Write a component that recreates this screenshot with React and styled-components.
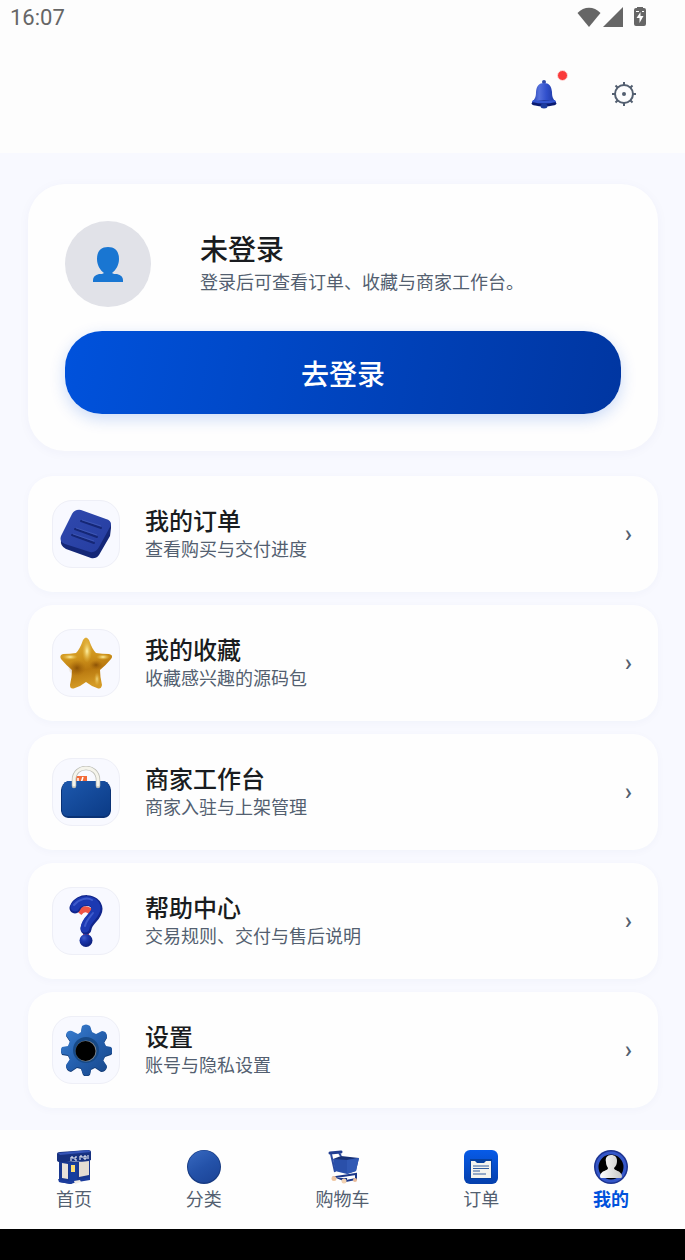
import styled, { createGlobalStyle } from 'styled-components';

const GlobalStyle = createGlobalStyle`
  * {
    box-sizing: border-box;
  }
  body {
    margin: 0;
    background: #f8f9ff;
    font-family: Roboto, 'Noto Sans CJK SC', sans-serif;
    color: #191c20;
  }
  h1, h2, p {
    margin: 0;
  }
`;

const Page = styled.div`
  display: flex;
  flex-direction: column;
  min-height: 100vh;
`;

const StatusBar = styled.div`
  display: flex;
  justify-content: space-between;
  align-items: center;
  height: 34px;
  padding: 0 38px 0 10px;
  background: #fdfdfd;
  color: #666;
  font-size: 22px;
`;

const StatusIcons = styled.div`
  display: flex;
  align-items: center;
  gap: 2px;
`;

const Header = styled.header`
  display: flex;
  justify-content: flex-end;
  align-items: center;
  gap: 24px;
  height: 119px;
  padding: 0 33px;
  background: #fdfdfd;
`;

const IconButton = styled.button`
  position: relative;
  display: flex;
  justify-content: center;
  align-items: center;
  width: 56px;
  height: 56px;
  padding: 0;
  border: none;
  border-radius: 50%;
  background: none;
  cursor: pointer;
`;

const Badge = styled.span`
  position: absolute;
  top: 4px;
  right: 4px;
  width: 11px;
  height: 11px;
  border: 1px solid #ffdfdf;
  border-radius: 50%;
  background: #fa3a3a;
`;

const Main = styled.main`
  flex: 1;
  padding: 31px 27px 21px 28px;
`;

const ProfileCard = styled.section`
  padding: 37px;
  border-radius: 37px;
  background: #fefefe;
  box-shadow: 0 2px 12px rgba(40, 60, 140, 0.04);
`;

const Profile = styled.div`
  display: flex;
  align-items: center;
  gap: 49px;
  margin-bottom: 24px;
`;

const Avatar = styled.div`
  display: flex;
  justify-content: center;
  align-items: center;
  width: 86px;
  height: 86px;
  border-radius: 50%;
  background: #e1e2e8;
`;

const ProfileText = styled.div`
  padding-top: 2px;
`;

const ProfileName = styled.h1`
  font-size: 28px;
  line-height: 36px;
  font-weight: 500;
`;

const Description = styled.p`
  color: #535f70;
  font-size: 18px;
  line-height: 28px;
`;

const LoginButton = styled.button`
  width: 100%;
  height: 83px;
  border: none;
  border-radius: 37px;
  background: linear-gradient(100deg, #0052dc, #0036a1);
  box-shadow: 0 5px 16px rgba(0, 82, 220, 0.2);
  color: #fff;
  font-family: inherit;
  font-size: 28px;
  font-weight: 500;
  cursor: pointer;
`;

const Menu = styled.nav`
  display: flex;
  flex-direction: column;
  gap: 13px;
  margin-top: 25px;
`;

const MenuRow = styled.a`
  display: flex;
  align-items: center;
  gap: 25px;
  padding: 24px 26px 24px 24px;
  border-radius: 25px;
  background: #fefefe;
  box-shadow: 0 2px 8px rgba(40, 60, 140, 0.03);
  color: inherit;
  text-decoration: none;
`;

const IconTile = styled.div`
  display: flex;
  justify-content: center;
  align-items: center;
  width: 68px;
  height: 68px;
  border: 1px solid #eeeff7;
  border-radius: 20px;
  background: #f8f9ff;
`;

const RowText = styled.div`
  flex: 1;
  padding-top: 4px;
`;

const RowTitle = styled.h2`
  font-size: 24px;
  line-height: 28px;
  font-weight: 500;
`;

const Chevron = styled.span`
  color: #535f70;
  font-size: 24px;
  font-weight: 500;
`;

const TabBar = styled.nav`
  display: flex;
  justify-content: space-between;
  height: 99px;
  padding: 20px 56px 0;
  background: #fefefe;
`;

const Tab = styled.a`
  display: flex;
  flex-direction: column;
  align-items: center;
  color: ${(props) => (props.$active ? '#0052dc' : '#535f70')};
  font-size: 18px;
  line-height: 31px;
  font-weight: ${(props) => (props.$active ? 700 : 400)};
  text-decoration: none;
`;

const SystemBar = styled.div`
  height: 31px;
  background: #000;
`;

const WifiIcon = () => (
  <svg width="24" height="20" viewBox="0 0 24 20" aria-hidden="true">
    <path d="M0.5 6C7-1 17-1 23.5 6L12 20Z" fill="#666" />
  </svg>
);

const SignalIcon = () => (
  <svg width="20" height="20" viewBox="0 0 20 20" aria-hidden="true">
    <path d="M20 0V20H0Z" fill="#666" />
  </svg>
);

const BatteryIcon = () => (
  <svg width="22" height="20" viewBox="0 0 22 20" aria-hidden="true">
    <path d="M12 0h6v1h1q2 0 2 2v14q0 2-2 2h-8q-2 0-2-2V3q0-2 2-2h1Z" fill="#666" />
    <path d="M15.5 5l-4 6h3v5l4-7h-3ZM11 4h3v1h-3ZM17 4h2v1h-2Z" fill="#fff" />
  </svg>
);

const BellIcon = () => (
  <svg width="26" height="30" viewBox="0 0 26 30" aria-hidden="true">
    <defs>
      <linearGradient id="bell">
        <stop offset="0" stopColor="#2440b0" />
        <stop offset="0.3" stopColor="#5570dc" />
        <stop offset="0.6" stopColor="#3150cc" />
        <stop offset="1" stopColor="#1c359d" />
      </linearGradient>
    </defs>
    <circle cx="13" cy="3" r="2" fill="#304aa8" />
    <path d="M13 4C8 4 5.500 7 5 13c0 5-1 7-4 10v2h24v-2c-3-3-4-5-4-10-.5-6-3-9-8-9Z" fill="url(#bell)" />
    <ellipse cx="13" cy="24.500" rx="12.500" ry="3" fill="#0a1b70" />
    <path d="M1 23q12 3 24 0l-1-2q-11 2-22 0Z" fill="#3455ce" />
    <ellipse cx="13" cy="27" rx="3.500" ry="2.500" fill="#1b3a9c" />
  </svg>
);

const SettingsIcon = () => (
  <svg width="24" height="24" viewBox="0 0 24 24" fill="none" stroke="#535f70" strokeWidth="2" aria-hidden="true">
    <circle cx="12" cy="12" r="9" />
    <circle cx="12" cy="12" r="2" fill="#535f70" stroke="none" />
    <path d="M12 0v3M12 21v3M0 12h3M21 12h3M3.500 3.500l2 2M18.500 18.500l2 2M20.500 3.500l-2 2M5.500 18.500l-2 2" />
  </svg>
);

const PersonIcon = () => (
  <svg width="30" height="35" viewBox="0 0 30 35" fill="#1976d2" aria-hidden="true">
    <path d="M15 0C8 0 4 4 4 12c0 6 3 11 7 14-1 1-3 1-5 1-4 1-6 3-6 6v2h30v-2c0-3-2-5-6-6-2 0-4 0-5-1 4-3 7-8 7-14 0-8-4-12-11-12Z" />
  </svg>
);

const OrderArt = () => (
  <svg width="52" height="50" viewBox="0 0 52 50" aria-hidden="true">
    <defs>
      <linearGradient id="order" x2="1" y2="1">
        <stop stopColor="#3049ae" />
        <stop offset="1" stopColor="#253da0" />
      </linearGradient>
    </defs>
    <path d="M14 6L46 11q6 2 5 8l-1 8-11 19q-3 4-8 3L6 40q-6-3-5-9Z" fill="#142777" />
    <path d="M12 5q3-5 9-4l25 9q7 2 4 8L39 38q-3 6-9 5L5 35q-6-2-4-8Z" fill="url(#order)" />
    <path d="M21 12l20 7M15 20l22 8M12 26l22 8" stroke="#152776" strokeWidth="2" strokeLinecap="round" />
    <path d="M22 11l19 6M16 19l21 7M13 25l21 7" stroke="#4a63bc" strokeWidth="0.6" />
  </svg>
);

const StarArt = () => (
  <svg width="52" height="52" viewBox="0 0 52 52" aria-hidden="true">
    <defs>
      <linearGradient id="gold" x2="0.2" y2="1">
        <stop offset="0" stopColor="#e3b33f" />
        <stop offset="0.45" stopColor="#cf941c" />
        <stop offset="0.7" stopColor="#b8780f" />
        <stop offset="1" stopColor="#d49a25" />
      </linearGradient>
      <radialGradient id="goldLight">
        <stop stopColor="#fff3a8" />
        <stop offset="1" stopColor="#e8b93c" stopOpacity="0" />
      </radialGradient>
      <radialGradient id="goldDark">
        <stop stopColor="#7f4702" stopOpacity="0.8" />
        <stop offset="1" stopColor="#a5640a" stopOpacity="0" />
      </radialGradient>
    </defs>
    <path
      d="M23 3q3-5 6 0 3 9 7 13 6 1 13 1 5 1 2 5-5 6-11 11 0 7 2 15-1 5-5 3-6-2-11-6-5 4-11 6-5 2-5-3 2-8 2-15Q6 28 1 22q-2-4 2-5 7 0 13-1 4-4 7-13Z"
      fill="url(#gold)"
    />
    <ellipse cx="17" cy="31" rx="9" ry="8" fill="url(#goldDark)" />
    <ellipse cx="36" cy="28" rx="7" ry="5" fill="url(#goldDark)" />
    <ellipse cx="27" cy="14" rx="5" ry="12" fill="url(#goldLight)" />
    <ellipse cx="10" cy="20" rx="8" ry="3" fill="url(#goldLight)" />
    <ellipse cx="43" cy="20" rx="7" ry="3" fill="url(#goldLight)" />
    <ellipse cx="37" cy="42" rx="3" ry="7" fill="url(#goldLight)" opacity="0.7" />
  </svg>
);

const BagArt = () => (
  <svg width="50" height="52" viewBox="0 0 50 52" aria-hidden="true">
    <defs>
      <linearGradient id="bag" x2="1" y2="1">
        <stop stopColor="#1d58ad" />
        <stop offset="1" stopColor="#0b3b86" />
      </linearGradient>
    </defs>
    <path d="M12 10h14v7H12Z" fill="#f26b38" />
    <path d="M17 12v5M22 11l-2 6" stroke="#fff" strokeWidth="1.5" />
    <path d="M7 15h36q6 2 7 9v21q-1 6-7 7H7q-6-1-7-7V24q1-7 7-9Z" fill="#0a3275" />
    <path d="M7 15h36q6 2 6 9v20q-1 6-6 6H7q-6 0-6-6V24q0-7 6-9Z" fill="url(#bag)" />
    <path d="M13 20v-6C13-2 37-2 37 14v6" fill="none" stroke="#bdbeb7" strokeWidth="4.500" strokeLinecap="round" />
    <path d="M13 19v-5C13-2 37-2 37 14v5" fill="none" stroke="#f5f4eb" strokeWidth="3" strokeLinecap="round" />
  </svg>
);

const HelpArt = () => (
  <svg width="34" height="52" viewBox="0 0 34 52" fill="none" aria-hidden="true">
    <defs>
      <radialGradient id="ball" cx="0.35" cy="0.3" r="0.7">
        <stop stopColor="#3f5ccb" />
        <stop offset="0.4" stopColor="#1c37ad" />
        <stop offset="1" stopColor="#0c207e" />
      </radialGradient>
    </defs>
    <path d="M10 18q6-7 12-1M14 39h6" stroke="#f05445" strokeWidth="6" />
    <path d="M6 13C10 3 27 3 28 14c0 8-10 11-11 20" stroke="#11268c" strokeWidth="11" strokeLinecap="round" />
    <path d="M6 12C10 4 26 3 27 13c0 8-10 11-11 20" stroke="#1c39b2" strokeWidth="9" strokeLinecap="round" />
    <path d="M5 10C10 4 18 2 23 5M24 18c-4 5-7 8-8 13" stroke="#3e5bcb" strokeWidth="2" strokeLinecap="round" />
    <circle cx="17" cy="45.500" r="6.500" fill="url(#ball)" />
  </svg>
);

const GearArt = () => (
  <svg width="52" height="52" viewBox="0 0 52 52" aria-hidden="true">
    <defs>
      <linearGradient id="gear" x2="1" y2="1">
        <stop stopColor="#3d82d4" />
        <stop offset="0.5" stopColor="#245fae" />
        <stop offset="1" stopColor="#164587" />
      </linearGradient>
      <path
        id="gearShape"
        d="M22 2q4-3 8 0l2 6 4 2 6-3q5 0 5 6l-3 5 2 4 5 1q3 4 0 7l-6 2-2 4 4 6q-1 5-6 5l-6-4-4 2-1 5q-4 3-7 0l-2-6-4-1-6 4q-5-1-5-6l4-6-2-4-6-1q-2-4 0-7l6-1 2-5-4-6q1-5 6-4l6 3 3-2Z"
      />
    </defs>
    <use href="#gearShape" y="1" fill="#113a75" />
    <use href="#gearShape" fill="url(#gear)" />
    <circle cx="26" cy="26" r="13" fill="#174986" />
    <circle cx="26" cy="27" r="10.500" fill="#78818b" />
    <circle cx="25.500" cy="27" r="10" fill="#000" />
  </svg>
);

const HomeArt = () => (
  <svg width="34" height="34" viewBox="0 0 34 34" aria-hidden="true">
    <path d="M2 10l15 2 16-2v18l-14 3-5 3-12-2Z" fill="#1a388f" />
    <path d="M5 13l6 1v15l-6-1Z" fill="#e9e2d8" />
    <path d="M22 12l10-1v14l-10 2Z" fill="#e5ddd3" />
    <path d="M12 13h8v18l-8 1Z" fill="#173e9e" />
    <path d="M14 15h4v7h-4Z" fill="#ffdc70" />
    <path d="M0 4q0-2 3-2l28-2q3 0 3 2v8l-3 1-28 1q-3 0-3-2Z" fill="#17317f" />
    <path d="M1 3l30-3 3 2-31 3Z" fill="#3554b6" />
    <path d="M14 7v4M14 7h2v2M20 7h-2v3h2M23 6v4M23 6h2v2M27 6v3h2V6ZM31 5v4" stroke="#fff" strokeWidth="1" fill="none" />
    <path d="M1 29l11 2 8-1 13-3v3l-12 2-8 2-11-2Z" fill="#1b3c9c" />
    <path d="M17 31l6-1 1 2-6 2Z" fill="#f1ece5" />
  </svg>
);

const CategoryArt = () => (
  <svg width="34" height="34" viewBox="0 0 34 34" aria-hidden="true">
    <defs>
      <linearGradient id="disc" x1="0.2" x2="0.8" y2="1">
        <stop stopColor="#3566bd" />
        <stop offset="0.5" stopColor="#2452a9" />
        <stop offset="1" stopColor="#1c4598" />
      </linearGradient>
    </defs>
    <circle cx="17" cy="17" r="17" fill="#173b83" />
    <circle cx="17" cy="16.500" r="16" fill="url(#disc)" />
  </svg>
);

const CartArt = () => (
  <svg width="34" height="34" viewBox="0 0 34 34" fill="none" aria-hidden="true">
    <path d="M4 3l11-1" stroke="#213e91" strokeWidth="3" strokeLinecap="round" />
    <path d="M5 4l2 9 2 9M13 3l2 3" stroke="#2b4aa0" strokeWidth="2" />
    <path d="M7 9l26-1-3 13-9 3-12-3Z" fill="#2a50aa" />
    <path d="M7 9l8-3 18 2-12 2Z" fill="#173177" />
    <path d="M21 10l12-2-3 13-9 3Z" fill="#3159b4" />
    <path d="M10 27l20-3v5l-10 2ZM11 27l10 2" stroke="#1c388a" strokeWidth="2" />
    <circle cx="8" cy="28.500" r="2.500" fill="#efc6a1" />
    <circle cx="18" cy="31" r="2.500" fill="#f1d2b2" />
    <circle cx="29" cy="30" r="2" fill="#e8b999" />
  </svg>
);

const OrdersTabArt = () => (
  <svg width="34" height="34" viewBox="0 0 34 34" aria-hidden="true">
    <defs>
      <linearGradient id="tile" x2="0" y2="1">
        <stop stopColor="#075be8" />
        <stop offset="1" stopColor="#053fac" />
      </linearGradient>
    </defs>
    <rect width="34" height="34" rx="6" fill="url(#tile)" />
    <path d="M6 9h22v20H6Z" fill="#06409f" />
    <path d="M7 11h4l2 2h7l2-2h5v17H7Z" fill="#f5f4ef" />
    <path d="M9 16h16M9 18.500h16M9 21h7M9 24h13" stroke="#315c9f" strokeWidth="1" />
  </svg>
);

const MineArt = () => (
  <svg width="34" height="34" viewBox="0 0 34 34" aria-hidden="true">
    <defs>
      <linearGradient id="bust">
        <stop stopColor="#fff" />
        <stop offset="1" stopColor="#c8c8c5" />
      </linearGradient>
    </defs>
    <circle cx="17" cy="17" r="17" fill="#1c338f" />
    <circle cx="17" cy="17" r="14" fill="#000" stroke="#3557c8" strokeWidth="3" />
    <path d="M17 5c-4 0-6 3-5 7 0 3 1 4 2 6 0 3-7 2-8 8 0 2 1 2 2 2h18c1 0 2 0 2-2-1-6-8-5-8-8 2-2 3-4 3-7 0-4-2-6-6-6Z" fill="url(#bust)" />
  </svg>
);

const MENU_ITEMS = [
  { title: '我的订单', description: '查看购买与交付进度', Art: OrderArt },
  { title: '我的收藏', description: '收藏感兴趣的源码包', Art: StarArt },
  { title: '商家工作台', description: '商家入驻与上架管理', Art: BagArt },
  { title: '帮助中心', description: '交易规则、交付与售后说明', Art: HelpArt },
  { title: '设置', description: '账号与隐私设置', Art: GearArt },
];

const TABS = [
  { label: '首页', Art: HomeArt },
  { label: '分类', Art: CategoryArt },
  { label: '购物车', Art: CartArt },
  { label: '订单', Art: OrdersTabArt },
  { label: '我的', Art: MineArt, active: true },
];

const App = () => {
  return (
    <Page>
      <GlobalStyle />
      <StatusBar>
        <span>16:07</span>
        <StatusIcons>
          <WifiIcon />
          <SignalIcon />
          <BatteryIcon />
        </StatusIcons>
      </StatusBar>
      <Header>
        <IconButton type="button" aria-label="消息">
          <BellIcon />
          <Badge />
        </IconButton>
        <IconButton type="button" aria-label="设置">
          <SettingsIcon />
        </IconButton>
      </Header>
      <Main>
        <ProfileCard>
          <Profile>
            <Avatar>
              <PersonIcon />
            </Avatar>
            <ProfileText>
              <ProfileName>未登录</ProfileName>
              <Description>登录后可查看订单、收藏与商家工作台。</Description>
            </ProfileText>
          </Profile>
          <LoginButton type="button">去登录</LoginButton>
        </ProfileCard>
        <Menu>
          {MENU_ITEMS.map(({ title, description, Art }) => (
            <MenuRow key={title} href="#">
              <IconTile>
                <Art />
              </IconTile>
              <RowText>
                <RowTitle>{title}</RowTitle>
                <Description>{description}</Description>
              </RowText>
              <Chevron>›</Chevron>
            </MenuRow>
          ))}
        </Menu>
      </Main>
      <TabBar>
        {TABS.map(({ label, Art, active }) => (
          <Tab key={label} href="#" $active={active} aria-current={active ? 'page' : undefined}>
            <Art />
            {label}
          </Tab>
        ))}
      </TabBar>
      <SystemBar />
    </Page>
  );
};

export default App;
